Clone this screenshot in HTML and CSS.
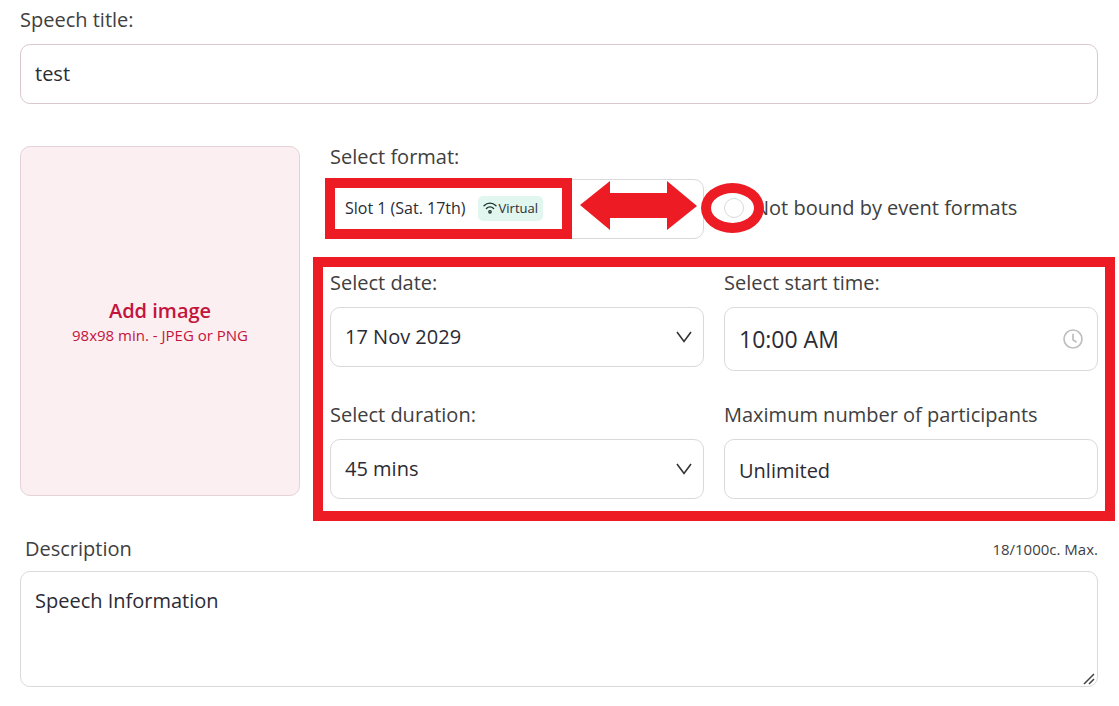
FILE: index.html
```html
<!DOCTYPE html>
<html lang="en">
<head>
    <meta charset="UTF-8">
    <meta name="viewport" content="width=device-width, initial-scale=1.0">
    <title>Speech</title>
    <link rel="stylesheet" href="styles.css">
</head>
<body>
    <form class="speech">
        <div class="field">
            <label for="title">Speech title:</label>
            <input class="control title" type="text" id="title" value="test">
        </div>

        <div class="main">
            <button type="button" class="upload">
                <strong>Add image</strong>
                <span>98x98 min. - JPEG or PNG</span>
            </button>

            <div class="settings">
                <div class="row">
                    <div class="field format-field">
                        <label for="format">Select format:</label>
                        <div class="format-box">
                            <button type="button" class="control format" id="format" aria-haspopup="listbox">
                                <span>Slot 1 (Sat. 17th)</span>
                                <span class="tag">
                                    <svg width="14" height="12" viewBox="0 0 14 12" fill="none" stroke="#16302b" stroke-width="1.3" stroke-linecap="round">
                                        <path d="M1 3.800C4.400 .3 9.600 .3 13 3.800"/>
                                        <path d="M3.400 6.500C5.500 4.300 8.500 4.300 10.600 6.500"/>
                                        <circle cx="7" cy="9.800" r="1.200"/>
                                    </svg>
                                    Virtual
                                </span>
                            </button>
                            <svg class="arrow" width="117" height="49" viewBox="0 0 117 49">
                                <path fill="#ed1c24" d="M0 24L30 0V12H87V0L117 25L87 49V37H30V49Z"/>
                            </svg>
                        </div>
                    </div>
                    <div class="unbound">
                        <span class="radio">
                            <input type="radio" id="unbound" name="bound">
                        </span>
                        <label for="unbound">Not bound by event formats</label>
                    </div>
                </div>

                <!-- date / time / duration -->
                <div class="details">
                    <div class="field">
                        <label for="date">Select date:</label>
                        <div class="picker">
                            <select class="control" id="date">
                                <option>17 Nov 2029</option>
                            </select>
                            <svg class="chevron" width="16" height="12" viewBox="0 0 16 12" fill="none" stroke="#333" stroke-width="1.6">
                                <path d="M1 1L8 10.500L15 1"/>
                            </svg>
                        </div>
                    </div>
                    <div class="field">
                        <label for="time">Select start time:</label>
                        <div class="picker">
                            <input class="control time" type="text" id="time" value="10:00 AM">
                            <svg class="clock" width="20" height="20" viewBox="0 0 20 20" fill="none" stroke="#bfbfbf" stroke-width="1.700">
                                <circle cx="10" cy="10" r="9"/>
                                <path d="M10 4.800V10.800L13.600 13.200"/>
                            </svg>
                        </div>
                    </div>
                    <div class="field">
                        <label for="duration">Select duration:</label>
                        <div class="picker">
                            <select class="control" id="duration">
                                <option>45 mins</option>
                            </select>
                            <svg class="chevron" width="16" height="12" viewBox="0 0 16 12" fill="none" stroke="#333" stroke-width="1.6">
                                <path d="M1 1L8 10.500L15 1"/>
                            </svg>
                        </div>
                    </div>
                    <div class="field">
                        <label for="people">Maximum number of participants</label>
                        <input class="control people" type="text" id="people" value="Unlimited">
                    </div>
                </div>
            </div>
        </div>

        <div class="field desc-field">
            <div class="desc-head">
                <label for="desc">Description</label>
                <span>18/1000c. Max.</span>
            </div>
            <div class="desc-box">
                <textarea class="control desc" id="desc">Speech Information</textarea>
                <svg class="grip" width="12" height="12" viewBox="0 0 12 12" stroke="#444" stroke-width="1.5">
                    <path d="M1 11L11 1M6 11L11 6"/>
                </svg>
            </div>
        </div>
    </form>
</body>
</html>
```
FILE: styles.css
```css
*,
*::before,
*::after{
    margin: 0;
    padding: 0;
    box-sizing: border-box;
}
body{
    font-family: "Open Sans", "Noto Sans", sans-serif;
    font-size: 20px;
    line-height: 28px;
    color: #404040;
    background-color: #fff;
}
.speech{
    padding: 6px 21px 19px 20px;
}
.field{
    display: flex;
    flex-direction: column;
    gap: 10px;
    min-width: 0;
}
.format-field,
.desc-field{
    gap: 8px;
}
.control{
    display: block;
    width: 100%;
    height: 60px;
    padding: 0 14px;
    border: 1px solid #d9d9d9;
    border-radius: 10px;
    background-color: #fff;
    font: inherit;
    color: #2b2b35;
    outline: none;
    appearance: none;
}
.title{
    padding-bottom: 2px;
    border-color: #d9c8cf;
}
.people{
    padding-top: 2px;
}

/* image + settings */
.main{
    display: flex;
    gap: 30px;
    margin: 39px 0 36px;
}
.upload{
    flex: 0 0 280px;
    height: 350px;
    margin-top: 3px;
    display: flex;
    flex-direction: column;
    align-items: center;
    justify-content: center;
    border: 1px solid #e3d3d8;
    border-radius: 10px;
    background-color: #fceff2;
    font: inherit;
    color: #c3143c;
}
.upload strong{
    font-weight: 600;
}
.upload span{
    font-size: 15px;
    line-height: 20px;
}
.settings{
    flex: 1;
    min-width: 0;
}
.row,
.details{
    display: grid;
    grid-template-columns: 1fr 1fr;
    gap: 30px 20px;
}
.details{
    position: relative;
    margin-top: 30px;
    align-items: start;
}
.picker,
.format-box,
.desc-box{
    position: relative;
}
.format{
    display: flex;
    align-items: center;
    gap: 12px;
    padding-bottom: 2px;
    font-size: 16px;
    text-align: left;
}
.tag{
    display: flex;
    align-items: center;
    gap: 2px;
    padding: 0 5px;
    border-radius: 5px;
    background-color: #e1f6ef;
    font-size: 13px;
    line-height: 25px;
}
.unbound{
    display: flex;
    align-items: center;
    align-self: end;
    gap: 10px;
    height: 62px;
}
.radio{
    position: relative;
    display: flex;
}
.radio input{
    width: 20px;
    height: 20px;
    border: 1px solid #d9d9d9;
    border-radius: 50%;
    background-color: #fff;
    appearance: none;
}
.time{
    height: 64px;
    font-size: 23px;
}
.chevron,
.clock{
    position: absolute;
    top: 0;
    bottom: 0;
    right: 12px;
    margin: auto 0;
    pointer-events: none;
}
.clock{
    right: 15px;
}

/* red marks */
.format-box::before,
.details::after,
.radio::after{
    content: "";
    position: absolute;
    border: 10px solid #ed1c24;
    pointer-events: none;
}
.format-box::before{
    top: -1px;
    left: -5px;
    width: 247px;
    height: 61px;
}
.details::after{
    top: -12px;
    left: -17px;
    right: -17px;
    bottom: -22px;
}
.radio::after{
    top: -15px;
    left: -23px;
    width: 63px;
    height: 50px;
    border-radius: 50%;
}
.arrow{
    position: absolute;
    top: 2px;
    left: 250px;
    pointer-events: none;
}

/* description */
.desc-head{
    display: flex;
    justify-content: space-between;
    padding-left: 5px;
}
.desc-head span{
    font-size: 15px;
}
.desc{
    height: 116px;
    padding: 15px 14px;
    resize: none;
}
.grip{
    position: absolute;
    right: 3px;
    bottom: 2px;
    pointer-events: none;
}
```
